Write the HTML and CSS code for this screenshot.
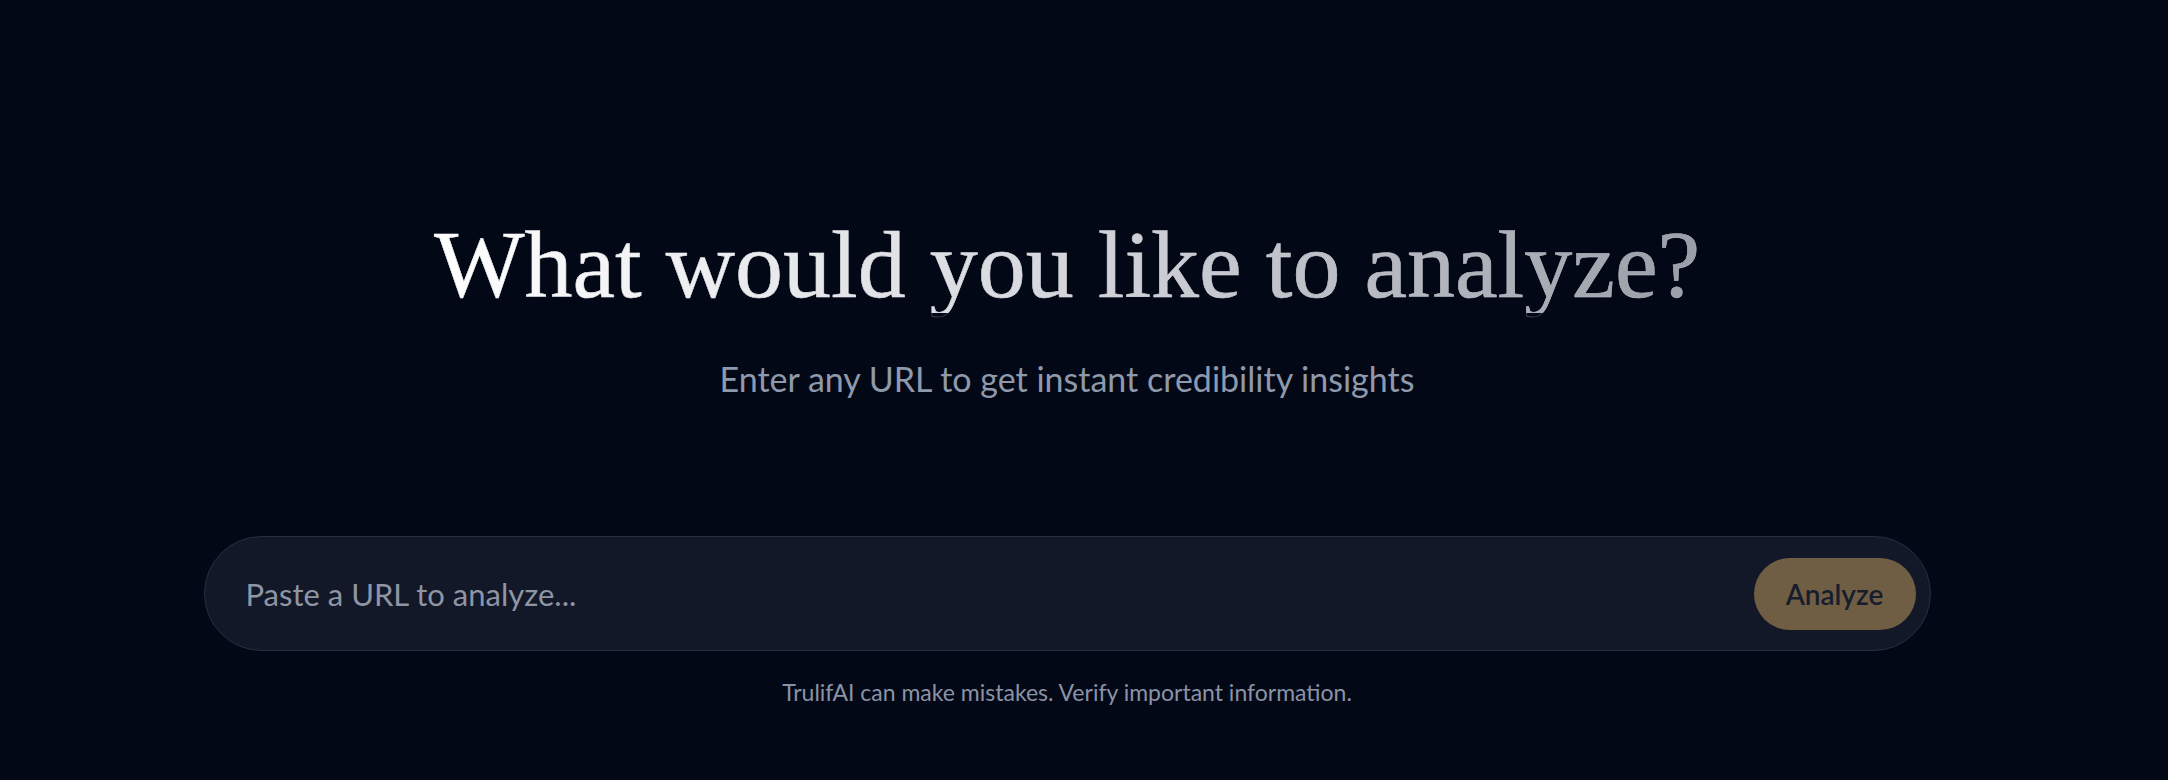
FILE: index.html
```html
<!DOCTYPE html>
<html lang="en">
<head>
<meta charset="utf-8">
<title>TrulifAI</title>
<link rel="stylesheet" href="styles.css">
</head>
<body>
<main class="page">
  <section class="hero">
    <h1 class="title">What would you like to analyze?</h1>
    <p class="subtitle">Enter any URL to get instant credibility insights</p>
  </section>
  <form class="search" onsubmit="return false">
    <input class="search-input" type="text" placeholder="Paste a URL to analyze...">
    <button class="search-btn" type="submit">Analyze</button>
  </form>
  <p class="note">TrulifAI can make mistakes. Verify important information.</p>
</main>
</body>
</html>
```

FILE: styles.css
```css
html, body {
  margin: 0;
  padding: 0;
  height: 100%;
  background: #030816;
}
body {
  font-family: Lato, "Open Sans", sans-serif;
  overflow: hidden;
}
.page {
  width: calc(100% - 34px);
  display: flex;
  flex-direction: column;
  align-items: center;
  padding-top: 217px;
}
.hero {
  display: flex;
  flex-direction: column;
  align-items: center;
}
.title {
  margin: 0;
  font-family: "Liberation Serif", "DejaVu Serif", serif;
  font-weight: 400;
  font-size: 96px;
  line-height: 1;
  letter-spacing: 0;
  background: linear-gradient(90deg, #ffffff 0%, #d9dbe0 45%, #9a9ea8 100%);
  -webkit-background-clip: text;
  background-clip: text;
  color: transparent;
  -webkit-text-stroke: 0.6px rgba(220, 222, 228, 0.35);
}
.subtitle {
  margin: 49px 0 0;
  font-size: 34px;
  line-height: 1;
  color: #8f99ac;
  font-weight: 400;
}
.search {
  margin-top: 140px;
  width: 1727px;
  box-sizing: border-box;
  display: flex;
  align-items: center;
  background: #121827;
  border: 1px solid #262f40;
  border-radius: 58px;
  padding: 21px 14px 20px 41px;
}
.search-input {
  flex: 1;
  background: transparent;
  border: 0;
  outline: none;
  font-family: inherit;
  font-size: 31px;
  color: #e5e7eb;
  padding: 0;
}
.search-input::placeholder {
  color: #8e95a4;
}
.search-btn {
  width: 162px;
  height: 72px;
  border: 0;
  border-radius: 36px;
  background: #6f5e44;
  color: #171d2c;
  font-family: inherit;
  font-size: 28px;
  font-weight: 600;
  cursor: pointer;
}
.note {
  margin: 30px 0 0;
  font-size: 23px;
  line-height: 1;
  color: #8a93a6;
}
```
